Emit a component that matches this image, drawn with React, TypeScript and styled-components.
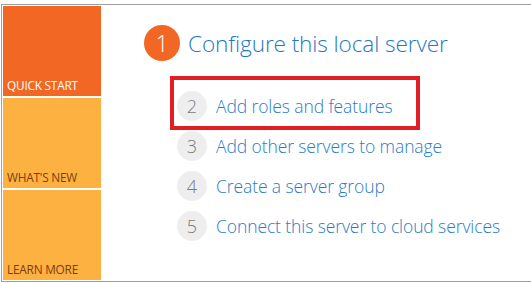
import React from "react";
import styled, { createGlobalStyle } from "styled-components";

const Global = createGlobalStyle`
  html, body { margin: 0; padding: 0; background: #ffffff; }
  body { font-family: "Open Sans", "Noto Sans", sans-serif; overflow: hidden; }
`;

const Frame = styled.div`
  margin: 4px 0 0 1px;
  height: 276px;
  border-top: 1px solid #a0a0a0;
  border-left: 1px solid #a0a0a0;
  border-bottom: 1px solid #a0a0a0;
  display: flex;
`;

const Sidebar = styled.div`
  width: 98px;
  padding: 1px;
  display: flex;
  flex-direction: column;
  gap: 2px;
  flex-shrink: 0;
`;

const Tile = styled.div<{ $active?: boolean }>`
  height: 90px;
  background: ${(p) => (p.$active ? "#f26724" : "#fdb141")};
  color: ${(p) => (p.$active ? "#ffffff" : "#7b3c12")};
  display: flex;
  align-items: flex-end;
  padding: 0 0 4px 4px;
  box-sizing: border-box;
  font-size: 11.8px;
  letter-spacing: -0.2px;
  line-height: 14px;
`;

const Main = styled.div`
  flex: 1;
  padding: 20px 0 0 40px;
  display: flex;
  flex-direction: column;
`;

const TitleRow = styled.div`
  display: flex;
  align-items: center;
  gap: 8px;
  height: 36px;
  margin-left: 2px;
`;

const BigNum = styled.div`
  width: 36px;
  height: 36px;
  border-radius: 50%;
  background: #f26724;
  color: #ffffff;
  display: flex;
  align-items: center;
  justify-content: center;
  font-size: 23px;
  font-weight: 300;
`;

const Title = styled.div`
  color: #1f78c4;
  font-size: 22.6px;
  font-weight: 300;
  letter-spacing: -0.1px;
`;

const List = styled.div`
  margin-top: 25px;
  display: flex;
  flex-direction: column;
`;

const Item = styled.div`
  height: 40px;
  display: flex;
  align-items: center;
  gap: 9px;
  position: relative;
  padding-left: 35px;
`;

const Highlight = styled.div`
  position: absolute;
  left: 28px;
  top: -10px;
  width: 250px;
  height: 54px;
  border: 4px solid #e21d23;
  box-sizing: border-box;
  pointer-events: none;
`;

const SmallNum = styled.div`
  width: 30px;
  height: 30px;
  border-radius: 50%;
  background: #eeeeee;
  color: #7a7a7a;
  display: flex;
  align-items: center;
  justify-content: center;
  font-size: 18px;
  font-weight: 300;
`;

const ItemText = styled.div`
  color: #2a7cc6;
  font-size: 17.5px;
  font-weight: 300;
  letter-spacing: -0.1px;
`;

const items = [
  { n: 2, text: "Add roles and features", highlight: true },
  { n: 3, text: "Add other servers to manage" },
  { n: 4, text: "Create a server group" },
  { n: 5, text: "Connect this server to cloud services" },
];

export default function App() {
  return (
    <>
      <Global />
      <Frame>
        <Sidebar>
          <Tile $active>QUICK START</Tile>
          <Tile>WHAT'S NEW</Tile>
          <Tile>LEARN MORE</Tile>
        </Sidebar>
        <Main>
          <TitleRow>
            <BigNum>1</BigNum>
            <Title>Configure this local server</Title>
          </TitleRow>
          <List>
            {items.map((it) => (
              <Item key={it.n}>
                {it.highlight && <Highlight />}
                <SmallNum>{it.n}</SmallNum>
                <ItemText>{it.text}</ItemText>
              </Item>
            ))}
          </List>
        </Main>
      </Frame>
    </>
  );
}
